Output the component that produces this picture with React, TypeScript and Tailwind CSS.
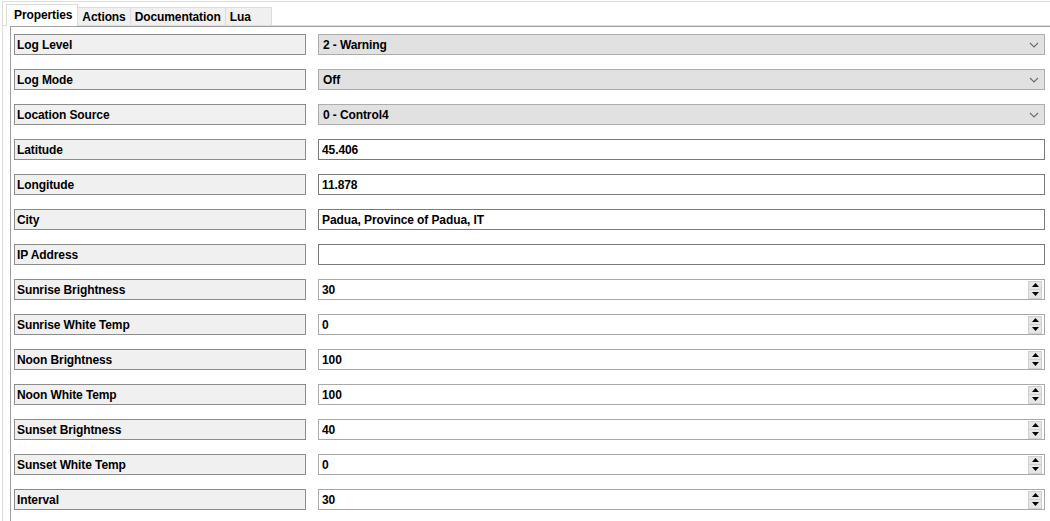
import React from 'react'

type Row =
  | { label: string; kind: 'select'; value: string }
  | { label: string; kind: 'text'; value: string }
  | { label: string; kind: 'spin'; value: string }

const ROWS: Row[] = [
  { label: 'Log Level', kind: 'select', value: '2 - Warning' },
  { label: 'Log Mode', kind: 'select', value: 'Off' },
  { label: 'Location Source', kind: 'select', value: '0 - Control4' },
  { label: 'Latitude', kind: 'text', value: '45.406' },
  { label: 'Longitude', kind: 'text', value: '11.878' },
  { label: 'City', kind: 'text', value: 'Padua, Province of Padua, IT' },
  { label: 'IP Address', kind: 'text', value: '' },
  { label: 'Sunrise Brightness', kind: 'spin', value: '30' },
  { label: 'Sunrise White Temp', kind: 'spin', value: '0' },
  { label: 'Noon Brightness', kind: 'spin', value: '100' },
  { label: 'Noon White Temp', kind: 'spin', value: '100' },
  { label: 'Sunset Brightness', kind: 'spin', value: '40' },
  { label: 'Sunset White Temp', kind: 'spin', value: '0' },
  { label: 'Interval', kind: 'spin', value: '30' },
]

const TABS = ['Properties', 'Actions', 'Documentation', 'Lua']

function Chevron() {
  return (
    <svg width="10" height="6" viewBox="0 0 10 6" className="shrink-0">
      <path d="M1 1 L5 5 L9 1" fill="none" stroke="#6b6b6b" strokeWidth="1.1" />
    </svg>
  )
}

function Spinner() {
  return (
    <div className="flex flex-col w-[14px] h-[18px] mr-[2px] shrink-0">
      <div className="flex-1 flex items-center justify-center bg-[#e6e6e6] border border-[#d0d0d0]">
        <svg width="7" height="4" viewBox="0 0 7 4">
          <path d="M0 4 L3.5 0 L7 4 Z" fill="#000" />
        </svg>
      </div>
      <div className="flex-1 flex items-center justify-center bg-[#e6e6e6] border border-t-0 border-[#d0d0d0]">
        <svg width="7" height="4" viewBox="0 0 7 4">
          <path d="M0 0 L7 0 L3.5 4 Z" fill="#000" />
        </svg>
      </div>
    </div>
  )
}

function Field({ row }: { row: Row }) {
  if (row.kind === 'select') {
    return (
      <div className="flex-1 h-[21px] flex items-center justify-between pl-[4px] pr-[5px] bg-[#e1e1e1] border border-[#adadad]">
        <span>{row.value}</span>
        <Chevron />
      </div>
    )
  }
  if (row.kind === 'spin') {
    return (
      <div className="flex-1 h-[21px] flex items-center justify-between pl-[3px] bg-white border border-[#a9a9a9]">
        <span>{row.value}</span>
        <Spinner />
      </div>
    )
  }
  return (
    <div className="flex-1 h-[21px] flex items-center pl-[3px] bg-white border border-[#7a7a7a]">
      <span>{row.value}</span>
    </div>
  )
}

export default function App() {
  return (
    <div className="w-[1050px] h-[521px] bg-white overflow-hidden pt-px pl-[2px] font-['Liberation_Sans',Arial,sans-serif] text-[12px] font-bold text-black tracking-[-0.1px]">
      <div className="h-full border-t border-l border-[#dcdcdc]">
        {/* Tab strip */}
        <div className="flex items-end h-[24px] pl-[3px] border-b border-[#dcdcdc]">
          {TABS.map((t, i) =>
            i === 0 ? (
              <div
                key={t}
                className="h-[22px] pl-[7px] pr-[5px] flex items-center bg-white border border-b-0 border-[#dcdcdc] -mb-px pb-[2px]"
              >
                {t}
              </div>
            ) : (
              <div
                key={t}
                className="h-[18px] px-[4px] flex items-center bg-[#f0f0f0] border border-b-0 border-l-0 border-[#dcdcdc] last:pr-[20px]"
              >
                {t}
              </div>
            )
          )}
        </div>

        {/* Properties panel */}
        <div className="ml-[7px] h-full border-t border-l border-[#a0a0a0] pt-[7px] pl-[3px] pr-[5px]">
          <div className="flex flex-col gap-[14px]">
            {ROWS.map((row) => (
              <div key={row.label} className="flex items-center gap-[12px]">
                <div className="w-[292px] h-[21px] shrink-0 flex items-center pl-[2px] bg-[#f0f0f0] border border-[#8c8c8c]">
                  {row.label}
                </div>
                <Field row={row} />
              </div>
            ))}
          </div>
        </div>
      </div>
    </div>
  )
}
